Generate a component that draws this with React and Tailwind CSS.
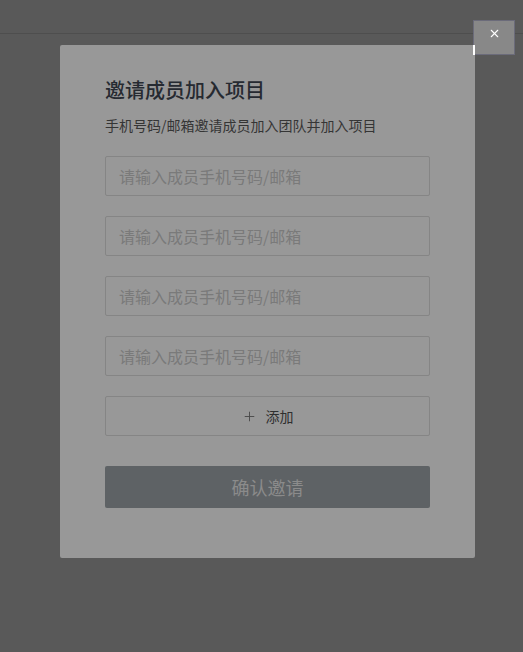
import { X, Plus } from 'lucide-react'

const font = { fontFamily: '"Noto Sans CJK SC", "Noto Sans", sans-serif' }

export default function App() {
  const inputs = [0, 1, 2, 3]
  return (
    <div className="relative min-h-[652px] bg-[#595959]" style={font}>
      <div className="h-[34px] border-b border-[#4e4e4e]" />

      <div className="ml-[60px] mt-[11px] w-[415px] h-[513px] bg-[#989898] rounded-[2px] pt-[31px] px-[45px]">
        <h2 className="text-[20px] leading-[28px] font-medium text-[#262a31]">邀请成员加入项目</h2>
        <p className="mt-[11px] text-[14px] leading-[20px] text-[#353535]">手机号码/邮箱邀请成员加入团队并加入项目</p>

        <div className="mt-[21px] flex flex-col gap-5">
          {inputs.map((i) => (
            <input
              key={i}
              placeholder="请输入成员手机号码/邮箱"
              className="h-10 w-full rounded-[2px] border border-[#858585] bg-transparent px-[13px] text-[16px] placeholder:text-[#7a7a7a] outline-none"
            />
          ))}
          <button className="h-10 w-full rounded-[2px] border border-[#858585] flex items-center justify-center gap-[9px] text-[14px] text-[#2f2f2f]">
            <Plus size={15} strokeWidth={1.5} className="text-[#4a4a4a]" />
            添加
          </button>
        </div>

        <button className="mt-[30px] h-[42px] w-full rounded-[2px] bg-[#5e6265] text-[18px] text-[#8b8b8b]">
          确认邀请
        </button>
      </div>

      <button className="absolute left-[473px] top-[20px] w-[42px] h-[35px] bg-[#888888] border border-[#6b6b7a] flex items-start justify-center pt-[6px] text-white">
        <X size={13} strokeWidth={2} />
      </button>
      <span className="absolute left-[473px] top-[45px] w-[2px] h-[10px] bg-white" />
    </div>
  )
}
